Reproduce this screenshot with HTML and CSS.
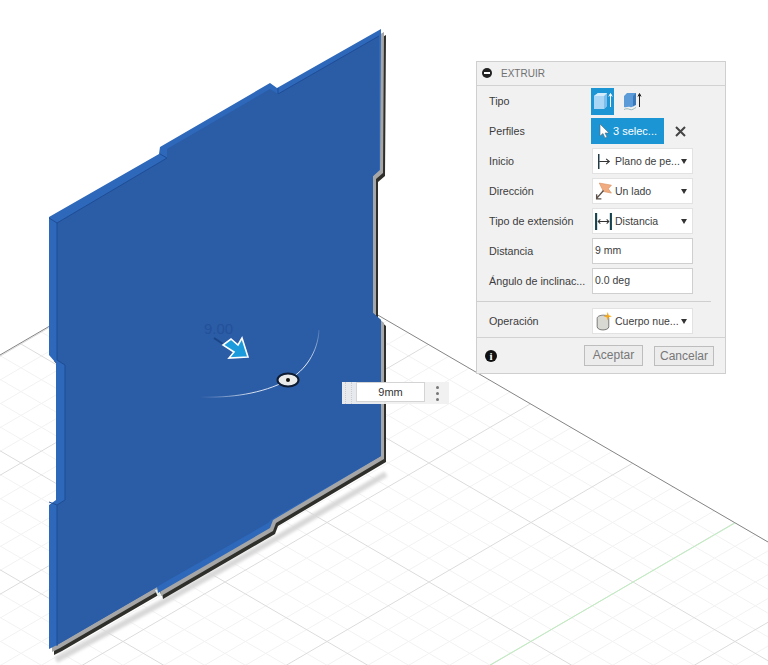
FILE: index.html
```html
<!DOCTYPE html>
<html lang="es">
<head>
  <meta charset="UTF-8">
  <title>Extruir</title>
  <link rel="stylesheet" href="styles.css">
</head>
<body>
  <!-- 3D viewport -->
  <svg class="viewport" width="768" height="665" viewBox="0 0 768 665">
    <defs>
      <pattern id="grid" x="633" y="582" width="204" height="119" patternUnits="userSpaceOnUse">
        <path class="gridMinor" d="M0 -95.2L204 23.8M0 -71.4L204 47.6M0 -47.6L204 71.4M0 -23.8L204 95.2M0 23.8L204 142.8M0 47.6L204 166.6M0 71.4L204 190.4M0 95.2L204 214.2M0 23.8L204 -95.2M0 47.6L204 -71.4M0 71.4L204 -47.6M0 95.2L204 -23.8M0 142.8L204 23.8M0 166.6L204 47.6M0 190.4L204 71.4M0 214.2L204 95.2"/>
        <path class="gridMajor" d="M0 0L204 119M0 119L204 0"/>
      </pattern>
      <filter id="soft"><feGaussianBlur stdDeviation="1.6"/></filter>
      <linearGradient id="arcFade" gradientUnits="userSpaceOnUse" x1="200" y1="398" x2="319" y2="330">
        <stop offset="0" stop-color="#fff" stop-opacity="0"/>
        <stop offset=".35" stop-color="#fff" stop-opacity=".8"/>
        <stop offset=".8" stop-color="#fff" stop-opacity=".9"/>
        <stop offset="1" stop-color="#fff" stop-opacity=".15"/>
      </linearGradient>
    </defs>

    <polygon fill="url(#grid)" points="223,225 768,542 768,665 0,665 0,355"/>
    <path class="axis" d="M0 355L223 225L768 542"/>
    <path class="axisGreen" d="M490 665L735 523"/>

    <!-- plate -->
    <path class="plateShadow" filter="url(#soft)" d="M56 660L165 601L277 538L386 474"/>
    <path class="plateDark" transform="translate(5 6)" d="M49 217L159 154L160 147L270 83L277 88L381 29L380 170L373 176L373 313L381 320L381 456L273 520L270 528L158 593L157 587L57 645L49 649L49 505L56 500L56 363L49 355Z"/>
    <path class="plateGray" transform="translate(3 3)" d="M49 217L159 154L160 147L270 83L277 88L381 29L380 170L373 176L373 313L381 320L381 456L273 520L270 528L158 593L157 587L57 645L49 649L49 505L56 500L56 363L49 355Z"/>
    <polygon class="plateLight" points="155,590 159,589 161,595 158,597"/>
    <path class="plateBand" d="M49 217L159 154L160 147L270 83L277 88L381 29L380 170L373 176L373 313L381 320L381 456L273 520L270 528L158 593L157 587L57 645L49 649L49 505L56 500L56 363L49 355Z"/>
    <path class="plateFace" d="M57 223L167 158L167 149L270 89L278 94L379 36L379 170L373 176L373 313L381 320L381 456L272 519L268 523L160 585L157 587L57 645L57 505L65 500L65 365L57 360Z"/>
    <path class="plateEdge" d="M57 646L57 505L49 502M57 505L65 500L65 365L57 360L57 223L49 218M57 223L167 158L160 154M278 88L278 94L379 36"/>

    <!-- drag manipulator -->
    <text class="dimText" x="204" y="334">9.00</text>
    <path class="dimLeader" d="M214 338L226 346"/>
    <path class="dragArrow" d="M248 357L229 358L234 352L223 345L231 339L238 345L242 338Z"/>
    <path class="arcLine" d="M319 330C318 352 305 371 288 380C262 394 230 398 200 397"/>
    <ellipse class="handle" cx="288" cy="380" rx="10.5" ry="6.5"/>
    <circle class="handleDot" cx="288" cy="380" r="2"/>
  </svg>

  <!-- value box beside the handle -->
  <div class="dimBox">
    <span class="dimGrip"></span>
    <span class="dimInput">9mm</span>
    <span class="dimMore"><i></i><i></i><i></i></span>
  </div>

  <!-- command dialog -->
  <div class="dialog">
    <div class="dialogHead">
      <span class="collapseBtn"></span>
      <span>EXTRUIR</span>
    </div>

    <div class="row">
      <label>Tipo</label>
      <div class="ctrl">
        <span class="typeBtn active">
          <svg width="22" height="22" viewBox="0 0 22 22">
            <path fill="#a9d6f5" d="M2 6L6 3H15V16L12 19H2Z"/>
            <path fill="#7fbdea" d="M12 6L15 3V16L12 19Z"/>
            <path fill="#d3ecfb" d="M2 6L6 3H15L12 6Z"/>
            <path fill="none" stroke="#fff" d="M18.5 17V4M16.8 6.5L18.5 3.5L20.2 6.5"/>
          </svg>
        </span>
        <span class="typeBtn second">
          <svg width="22" height="22" viewBox="0 0 22 22">
            <path fill="#5b9bd8" d="M3 6L6 3H15V15C13 15 12 18 9 17C7 16 5 18 3 17Z"/>
            <path fill="#3a78ba" d="M12 6L15 3V15C14 15 13 16 12 16.500Z"/>
            <path fill="none" stroke="#8aa" stroke-width=".8" d="M3 19.500C5 18.500 7 18.500 9 19.500C11 20.500 13 18.500 15 17.500"/>
            <path fill="none" stroke="#222" d="M18.500 17V4M17 6.500L18.500 3.500L20 6.500"/>
          </svg>
        </span>
      </div>
    </div>

    <div class="row">
      <label>Perfiles</label>
      <div class="ctrl">
        <span class="selectBtn">
          <svg width="12" height="16" viewBox="0 0 12 16">
            <path fill="#fff" stroke="#5a6a75" stroke-width=".6" d="M2 1V13L5 10.500L7 15L9 14L7 10H11Z"/>
          </svg>
          3 selec...
        </span>
        <svg class="clearBtn" width="11" height="11" viewBox="0 0 11 11">
          <path fill="none" stroke="#444" stroke-width="2" d="M1 1L10 10M10 1L1 10"/>
        </svg>
      </div>
    </div>

    <div class="row">
      <label>Inicio</label>
      <div class="ctrl">
        <span class="dropdown">
          <svg width="17" height="19" viewBox="0 0 16 18">
            <path fill="none" stroke="#1d3a45" stroke-width="1.4" d="M3.500 2V16"/>
            <path fill="none" stroke="#333" d="M4 9H13M10.500 6.500L13.500 9L10.500 11.500"/>
          </svg>
          <span class="ddText">Plano de pe...</span>
          <span class="caret"></span>
        </span>
      </div>
    </div>

    <div class="row">
      <label>Dirección</label>
      <div class="ctrl">
        <span class="dropdown">
          <svg width="17" height="19" viewBox="0 0 16 18">
            <path fill="#f0ac80" stroke="#d98f5c" stroke-width=".6" d="M4 1L15.500 3L12.500 6.500L15.500 10.500L8 9Z"/>
            <path fill="none" stroke="#5a5048" stroke-width="1.300" d="M8 8L1.500 15.500M1.500 11.500V16H6"/>
          </svg>
          <span class="ddText">Un lado</span>
          <span class="caret"></span>
        </span>
      </div>
    </div>

    <div class="row">
      <label>Tipo de extensión</label>
      <div class="ctrl">
        <span class="dropdown">
          <svg width="17" height="19" viewBox="0 0 16 18">
            <path fill="none" stroke="#14424f" stroke-width="2" d="M1 1V17M15 1V17"/>
            <path fill="none" stroke="#333" d="M3 9H13M5 7L3 9L5 11M11 7L13 9L11 11"/>
          </svg>
          <span class="ddText">Distancia</span>
          <span class="caret"></span>
        </span>
      </div>
    </div>

    <div class="row">
      <label>Distancia</label>
      <div class="ctrl"><span class="textInput">9 mm</span></div>
    </div>

    <div class="row">
      <label>Ángulo de inclinac...</label>
      <div class="ctrl"><span class="textInput">0.0 deg</span></div>
    </div>

    <div class="sep"></div>

    <div class="row">
      <label>Operación</label>
      <div class="ctrl">
        <span class="dropdown">
          <svg width="17" height="19" viewBox="0 0 16 18">
            <path fill="#d9d9d4" stroke="#666" stroke-width=".8" d="M2 6C2 4 5 3 8 3C11 3 13 4 13 6V14C13 16 10 17 7.500 17C5 17 2 16 2 14Z"/>
            <path fill="#f5a81c" d="M12 0L13 3L16 4L13 5L12 8L11 5L8 4L11 3Z"/>
          </svg>
          <span class="ddText">Cuerpo nue...</span>
          <span class="caret"></span>
        </span>
      </div>
    </div>

    <div class="dialogFoot">
      <span class="infoIcon">i</span>
      <span class="footBtn okBtn">Aceptar</span>
      <span class="footBtn cancelBtn">Cancelar</span>
    </div>
  </div>
</body>
</html>
```

FILE: styles.css
```css
html, body {
  margin: 0;
  padding: 0;
  background: #fff;
  overflow: hidden;
}
body {
  width: 768px;
  height: 665px;
  position: relative;
  font-family: "Liberation Sans", Arial, sans-serif;
}
.viewport {
  position: absolute;
  left: 0;
  top: 0;
  display: block;
}

/* grid */
.gridMinor {
  fill: none;
  stroke: #f2f2f2;
  stroke-width: 1;
}
.gridMajor {
  fill: none;
  stroke: #dcdcdc;
  stroke-width: 1;
}
.axis {
  fill: none;
  stroke: #858585;
  stroke-width: 1;
}
.axisGreen {
  fill: none;
  stroke: #bdeebd;
  stroke-width: 1;
}

/* plate */
.plateShadow {
  fill: none;
  stroke: #d8d8d8;
  stroke-width: 6;
}
.plateDark {
  fill: #2e2e2a;
}
.plateGray {
  fill: #a6a6a6;
}
.plateLight {
  fill: #e6efe9;
}
.plateBand {
  fill: #2d68ba;
}
.plateFace {
  fill: #2b5ca6;
}
.plateEdge {
  fill: none;
  stroke: #1f4d96;
  stroke-width: 1;
}

/* manipulator */
.dimText {
  font-size: 15px;
  fill: #245199;
}
.dimLeader {
  fill: none;
  stroke: #1b4487;
  stroke-width: 2;
}
.dragArrow {
  fill: #1c9bdc;
  stroke: #fff;
  stroke-width: 1.6;
  stroke-linejoin: miter;
}
.arcLine {
  fill: none;
  stroke: url(#arcFade);
  stroke-width: 1;
}
.handle {
  fill: #e9ecea;
  stroke: #0e1c33;
  stroke-width: 2;
}
.handleDot {
  fill: #111;
}

/* value box */
.dimBox {
  position: absolute;
  left: 342px;
  top: 382px;
  width: 107px;
  height: 22px;
  display: flex;
  background: rgba(240, 240, 240, .95);
}
.dimGrip {
  width: 7px;
  margin-left: 3px;
  margin-right: -2px;
  box-sizing: border-box;
  border-left: 1px dotted #ccc;
  border-right: 1px dotted #ccc;
}
.dimInput {
  margin-left: 6px;
  width: 69px;
  height: 20px;
  box-sizing: border-box;
  background: #fff;
  border: 1px solid #d4d4d4;
  font-size: 11px;
  line-height: 19px;
  text-align: center;
  color: #333;
}
.dimMore {
  flex: 1;
  display: flex;
  flex-direction: column;
  align-items: center;
  justify-content: center;
  gap: 3px;
  height: 22px;
}
.dimMore i {
  display: block;
  width: 3px;
  height: 3px;
  border-radius: 50%;
  background: #777;
}

/* dialog */
.dialog {
  position: absolute;
  left: 476px;
  top: 61px;
  width: 250px;
  height: 313px;
  box-sizing: border-box;
  background: #f1f1f1;
  border: 1px solid #cfcfcf;
  font-size: 10.500px;
  color: #3c3c3c;
}
.dialogHead {
  height: 22px;
  padding-bottom: 1px;
  display: flex;
  align-items: center;
  gap: 9px;
  padding-left: 5px;
  border-bottom: 1px solid #d2d2d2;
  color: #707070;
  font-size: 10px;
}
.collapseBtn {
  width: 10px;
  height: 10px;
  border-radius: 50%;
  background: #222;
  position: relative;
}
.collapseBtn::after {
  content: "";
  position: absolute;
  left: 2px;
  top: 4px;
  width: 6px;
  height: 2px;
  background: #fff;
}
.row {
  height: 30px;
  display: grid;
  grid-template-columns: 103px 1fr;
  align-items: center;
  padding-left: 12px;
}
.row label {
  white-space: nowrap;
  font-size: 10.750px;
}
.ctrl {
  display: flex;
  align-items: center;
  gap: 2px;
}
.typeBtn {
  width: 23px;
  height: 27px;
  display: flex;
  align-items: center;
  justify-content: center;
  margin-left: -1px;
  margin-right: 1px;
}
.typeBtn.active {
  background: #1b95d3;
}
.typeBtn.second {
  margin-left: 3px;
}
.selectBtn {
  width: 73px;
  height: 26px;
  margin-left: -1px;
  display: flex;
  align-items: center;
  gap: 3px;
  padding-left: 7px;
  box-sizing: border-box;
  background: #1b95d3;
  color: #fff;
  font-size: 11px;
}
.clearBtn {
  margin-left: 9px;
}
.dropdown {
  width: 101px;
  height: 26px;
  box-sizing: border-box;
  display: flex;
  align-items: center;
  gap: 3px;
  padding-left: 2px;
  background: #fff;
  border: 1px solid #e2e2e2;
  position: relative;
}
.ddText {
  white-space: nowrap;
}
.caret {
  position: absolute;
  right: 5px;
  top: 10px;
  border-left: 3px solid transparent;
  border-right: 3px solid transparent;
  border-top: 5px solid #333;
}
.textInput {
  width: 101px;
  height: 26px;
  box-sizing: border-box;
  padding-left: 2px;
  line-height: 22px;
  background: #fff;
  border: 1px solid #cfcfcf;
}
.sep {
  height: 1px;
  width: 234px;
  margin-top: 5px;
  margin-bottom: 4px;
  background: #cfcfcf;
}
.dialogFoot {
  height: 36px;
  margin-top: 1px;
  box-sizing: border-box;
  border-top: 1px solid #d2d2d2;
  display: flex;
  align-items: center;
  padding-left: 8px;
  padding-right: 11px;
}
.infoIcon {
  width: 12px;
  height: 12px;
  border-radius: 50%;
  background: #111;
  color: #fff;
  font-family: "Liberation Serif", serif;
  font-weight: bold;
  font-size: 11px;
  line-height: 12px;
  text-align: center;
  margin-right: auto;
}
.footBtn {
  box-sizing: border-box;
  border: 1px solid #bdbdbd;
  background: #ececec;
  color: #777;
  font-size: 12px;
  text-align: center;
}
.okBtn {
  width: 59px;
  height: 21px;
  line-height: 19px;
  margin-right: 11px;
}
.cancelBtn {
  width: 60px;
  height: 20px;
  line-height: 18px;
}
```
